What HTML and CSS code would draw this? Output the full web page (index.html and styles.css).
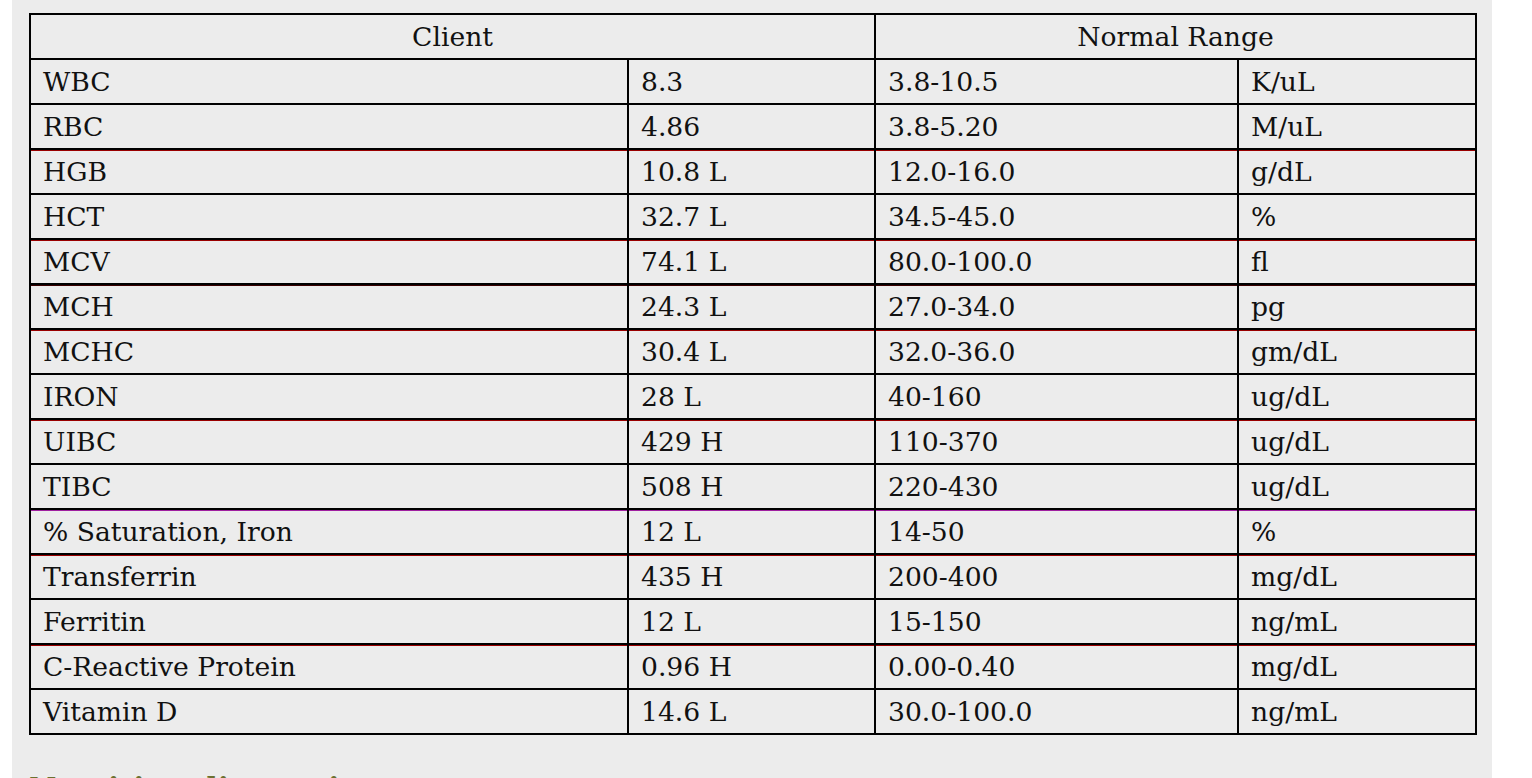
FILE: index.html
```html
<!DOCTYPE html>
<html>
<head>
<meta charset="utf-8">
<link rel="stylesheet" href="styles.css">
</head>
<body>
<div class="page">
  <div class="panel">
    <table class="labs">
      <colgroup>
        <col class="c1"><col class="c2"><col class="c3"><col class="c4">
      </colgroup>
      <thead>
        <tr><th colspan="2">Client</th><th colspan="2">Normal Range</th></tr>
      </thead>
      <tbody>
        <tr><td>WBC</td><td>8.3</td><td>3.8-10.5</td><td>K/uL</td></tr>
        <tr><td>RBC</td><td>4.86</td><td>3.8-5.20</td><td>M/uL</td></tr>
        <tr class="red"><td>HGB</td><td>10.8 L</td><td>12.0-16.0</td><td>g/dL</td></tr>
        <tr><td>HCT</td><td>32.7 L</td><td>34.5-45.0</td><td>%</td></tr>
        <tr class="red"><td>MCV</td><td>74.1 L</td><td>80.0-100.0</td><td>fl</td></tr>
        <tr class="dark"><td>MCH</td><td>24.3 L</td><td>27.0-34.0</td><td>pg</td></tr>
        <tr class="red"><td>MCHC</td><td>30.4 L</td><td>32.0-36.0</td><td>gm/dL</td></tr>
        <tr><td>IRON</td><td>28 L</td><td>40-160</td><td>ug/dL</td></tr>
        <tr class="red"><td>UIBC</td><td>429 H</td><td>110-370</td><td>ug/dL</td></tr>
        <tr><td>TIBC</td><td>508 H</td><td>220-430</td><td>ug/dL</td></tr>
        <tr class="purple"><td>% Saturation, Iron</td><td>12 L</td><td>14-50</td><td>%</td></tr>
        <tr class="red"><td>Transferrin</td><td>435 H</td><td>200-400</td><td>mg/dL</td></tr>
        <tr><td>Ferritin</td><td>12 L</td><td>15-150</td><td>ng/mL</td></tr>
        <tr class="red"><td>C-Reactive Protein</td><td>0.96 H</td><td>0.00-0.40</td><td>mg/dL</td></tr>
        <tr><td>Vitamin D</td><td>14.6 L</td><td>30.0-100.0</td><td>ng/mL</td></tr>
      </tbody>
    </table>
    <h2 class="next">Nutrition diagnosis</h2>
  </div>
</div>
</body>
</html>
```
FILE: styles.css
```css
html, body {
  margin: 0;
  padding: 0;
  background: #ffffff;
}
.page {
  padding-left: 12px;
  width: 1480px;
  height: 778px;
  overflow: hidden;
}
.panel {
  background: #ececec;
  padding: 13px 0 0 17px;
  height: 800px;
  box-sizing: border-box;
}
.labs {
  border-collapse: collapse;
  table-layout: fixed;
  width: 1448px;
  border: 2px solid #000;
  font-family: "DejaVu Serif", serif;
  font-size: 26.6px;
  color: #111;
}
.c1 { width: 598px; }
.c2 { width: 247px; }
.c3 { width: 363px; }
.c4 { width: 238px; }
.labs th, .labs td {
  border: 2px solid #000;
  height: 43px;
  padding: 0 0 0 12px;
  line-height: 43px;
  text-align: left;
  font-weight: normal;
  white-space: nowrap;
}
.labs th {
  text-align: center;
  padding: 0;
}
.labs tr.red td { box-shadow: inset 0 1px 0 #9a0000; }
.labs tr.dark td { box-shadow: inset 0 1px 0 #3a0000; }
.labs tr.purple td { box-shadow: inset 0 1px 0 #a020a0; }
.next {
  margin: 36px 0 0 0;
  font-family: "DejaVu Serif", serif;
  font-size: 30px;
  font-weight: bold;
  color: #6b7030;
}
```
